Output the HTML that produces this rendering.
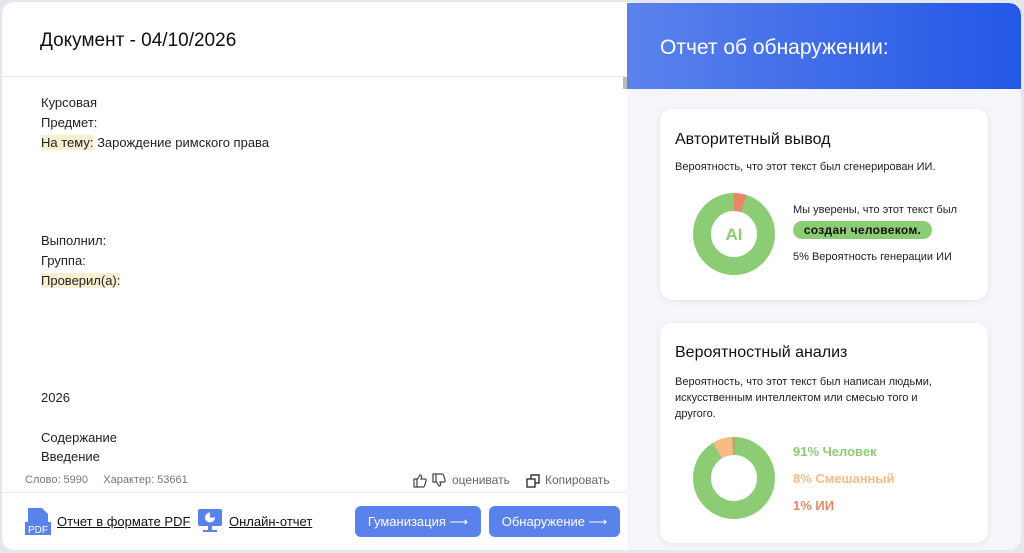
<!DOCTYPE html>
<html><head><meta charset="utf-8"><style>
*{margin:0;padding:0;box-sizing:border-box}
body{width:1024px;height:553px;background:#e6e7ec;font-family:"Liberation Sans",sans-serif;position:relative;overflow:hidden;color:#222}
.abs{position:absolute}
#left{left:2px;top:2px;width:640px;height:548px;background:#fff;border-radius:12px}
#right{left:627px;top:3px;width:394px;height:547px;background:#f5f6fa;border-radius:0 12px 12px 0;overflow:hidden}
#hdr{left:0;top:0;width:394px;height:86px;background:linear-gradient(90deg,#5b82ec,#2357e6);border-radius:0 12px 0 0}
.t{position:absolute;font-size:13px;left:41px;white-space:nowrap}
.hl{background:#f5efcf}
.card{position:absolute;background:#fff;border-radius:12px;box-shadow:0 1px 6px rgba(0,0,0,.08)}
.btn{position:absolute;top:506px;height:31px;background:#5a82ec;border-radius:6px;color:#fff;font-size:13px;text-align:center;line-height:31px}
.u{text-decoration:underline;font-size:13px;position:absolute;top:514px;color:#111}
</style></head><body>
<div id="left" class="abs"></div>
<div class="abs" style="left:40px;top:30px;font-size:19px;color:#111">Документ - 04/10/2026</div>
<div class="abs" style="left:2px;top:76px;width:625px;height:1px;background:#e8e8e8"></div>
<div class="abs" style="left:623px;top:77px;width:4px;height:12px;background:#bbb"></div>
<div class="t" style="top:95px">Курсовая</div>
<div class="t" style="top:115px">Предмет:</div>
<div class="t" style="top:135px"><span class="hl">На тему:</span> Зарождение римского права</div>
<div class="t" style="top:233px">Выполнил:</div>
<div class="t" style="top:253px">Группа:</div>
<div class="t" style="top:273px"><span class="hl">Проверил(а):</span></div>
<div class="t" style="top:390px">2026</div>
<div class="t" style="top:430px">Содержание</div>
<div class="t" style="top:449px">Введение</div>
<div class="abs" style="left:25px;top:474px;font-size:11px;color:#777">Слово: 5990&nbsp;&nbsp;&nbsp;&nbsp;&nbsp;Характер: 53661</div>
<svg class="abs" style="left:413px;top:473px" width="34" height="15" fill="none" stroke="#444" stroke-width="1.2"><path d="M1 6h3v8H1zM4 7l3-5c1 0 2 1 1.5 3L8 6h4c1 0 1.5 1 1 2l-1.5 5c-.3.7-.8 1-1.5 1H4"/><path d="M20 9h3V1h-3zM23 8l3 5c1 0 2-1 1.5-3L27 9h4c1 0 1.5-1 1-2l-1.5-5c-.3-.7-.8-1-1.5-1h-6"/></svg>
<div class="abs" style="left:452px;top:473px;font-size:12px;color:#666">оценивать</div>
<svg class="abs" style="left:526px;top:474px" width="14" height="14" fill="none" stroke="#333" stroke-width="1.4"><rect x="1" y="5" width="8" height="8"/><path d="M5 5V1h8v8H9"/></svg>
<div class="abs" style="left:545px;top:473px;font-size:12px;color:#666">Копировать</div>
<div class="abs" style="left:2px;top:492px;width:625px;height:1px;background:#eee"></div>
<svg class="abs" style="left:25px;top:507px" width="26" height="28"><path d="M3 1h14l6 6v8H3z" fill="#5a82ec"/><rect x="0" y="15" width="26" height="13" fill="#5a82ec"/><text x="13" y="26" font-size="10" fill="#fff" text-anchor="middle" font-family="Liberation Sans">PDF</text></svg>
<div class="u" style="left:57px">Отчет в формате PDF</div>
<svg class="abs" style="left:197px;top:508px" width="26" height="26"><rect x="1" y="1" width="24" height="17" rx="2" fill="#5a82ec"/><circle cx="13" cy="9.5" r="5" fill="#fff"/><path d="M13 9.5V4.5A5 5 0 0 1 18 9.5z" fill="#5a82ec"/><rect x="11" y="18" width="4" height="4" fill="#5a82ec"/><rect x="6" y="22" width="14" height="2" fill="#5a82ec"/></svg>
<div class="u" style="left:229px">Онлайн-отчет</div>
<div class="btn" style="left:355px;width:126px">Гуманизация ⟶</div>
<div class="btn" style="left:489px;width:131px">Обнаружение ⟶</div>

<div id="right" class="abs">
<div id="hdr" class="abs"></div>
<div class="abs" style="left:33px;top:33px;font-size:21px;color:#fff">Отчет об обнаружении:</div>
</div>
<div class="card" style="left:660px;top:109px;width:328px;height:191px"></div>
<div class="abs" style="left:675px;top:131px;font-size:16px;color:#111">Авторитетный вывод</div>
<div class="abs" style="left:675px;top:161px;font-size:11px">Вероятность, что этот текст был сгенерирован ИИ.</div>
<svg class="abs" style="left:692px;top:192px" width="84" height="84"><circle cx="42" cy="42" r="32" fill="none" stroke="#8ccc74" stroke-width="18"/><circle cx="42" cy="42" r="32" fill="none" stroke="#e8866a" stroke-width="18" stroke-dasharray="10 200" transform="rotate(-90 42 42)"/><text x="42" y="48" font-size="17" font-weight="bold" fill="#8ccc74" text-anchor="middle" font-family="Liberation Sans">AI</text></svg>
<div class="abs" style="left:793px;top:204px;font-size:11px">Мы уверены, что этот текст был</div>
<div class="abs" style="left:793px;top:221px;height:18px;width:139px;background:#8ccc74;border-radius:9px;font-size:12px;font-weight:bold;color:#111;line-height:18px;text-align:center;letter-spacing:.3px">создан человеком.</div>
<div class="abs" style="left:793px;top:251px;font-size:11px">5% Вероятность генерации ИИ</div>

<div class="card" style="left:660px;top:323px;width:328px;height:220px"></div>
<div class="abs" style="left:675px;top:344px;font-size:16px;color:#111">Вероятностный анализ</div>
<div class="abs" style="left:675px;top:374px;font-size:11px;line-height:16px;width:285px">Вероятность, что этот текст был написан людьми, искусственным интеллектом или смесью того и другого.</div>
<svg class="abs" style="left:692px;top:436px" width="84" height="84"><circle cx="42" cy="42" r="32" fill="none" stroke="#8ccc74" stroke-width="18"/><circle cx="42" cy="42" r="32" fill="none" stroke="#f9bb86" stroke-width="18" stroke-dasharray="16 200" transform="rotate(-121 42 42)"/><circle cx="42" cy="42" r="32" fill="none" stroke="#e8866a" stroke-width="18" stroke-dasharray="1.5 200" transform="rotate(-92 42 42)"/></svg>
<div class="abs" style="left:793px;top:444px;font-size:13px;font-weight:bold;color:#8ccc74">91% Человек</div>
<div class="abs" style="left:793px;top:471px;font-size:13px;font-weight:bold;color:#f9bb86">8% Смешанный</div>
<div class="abs" style="left:793px;top:498px;font-size:13px;font-weight:bold;color:#e8866a">1% ИИ</div>
</body></html>
